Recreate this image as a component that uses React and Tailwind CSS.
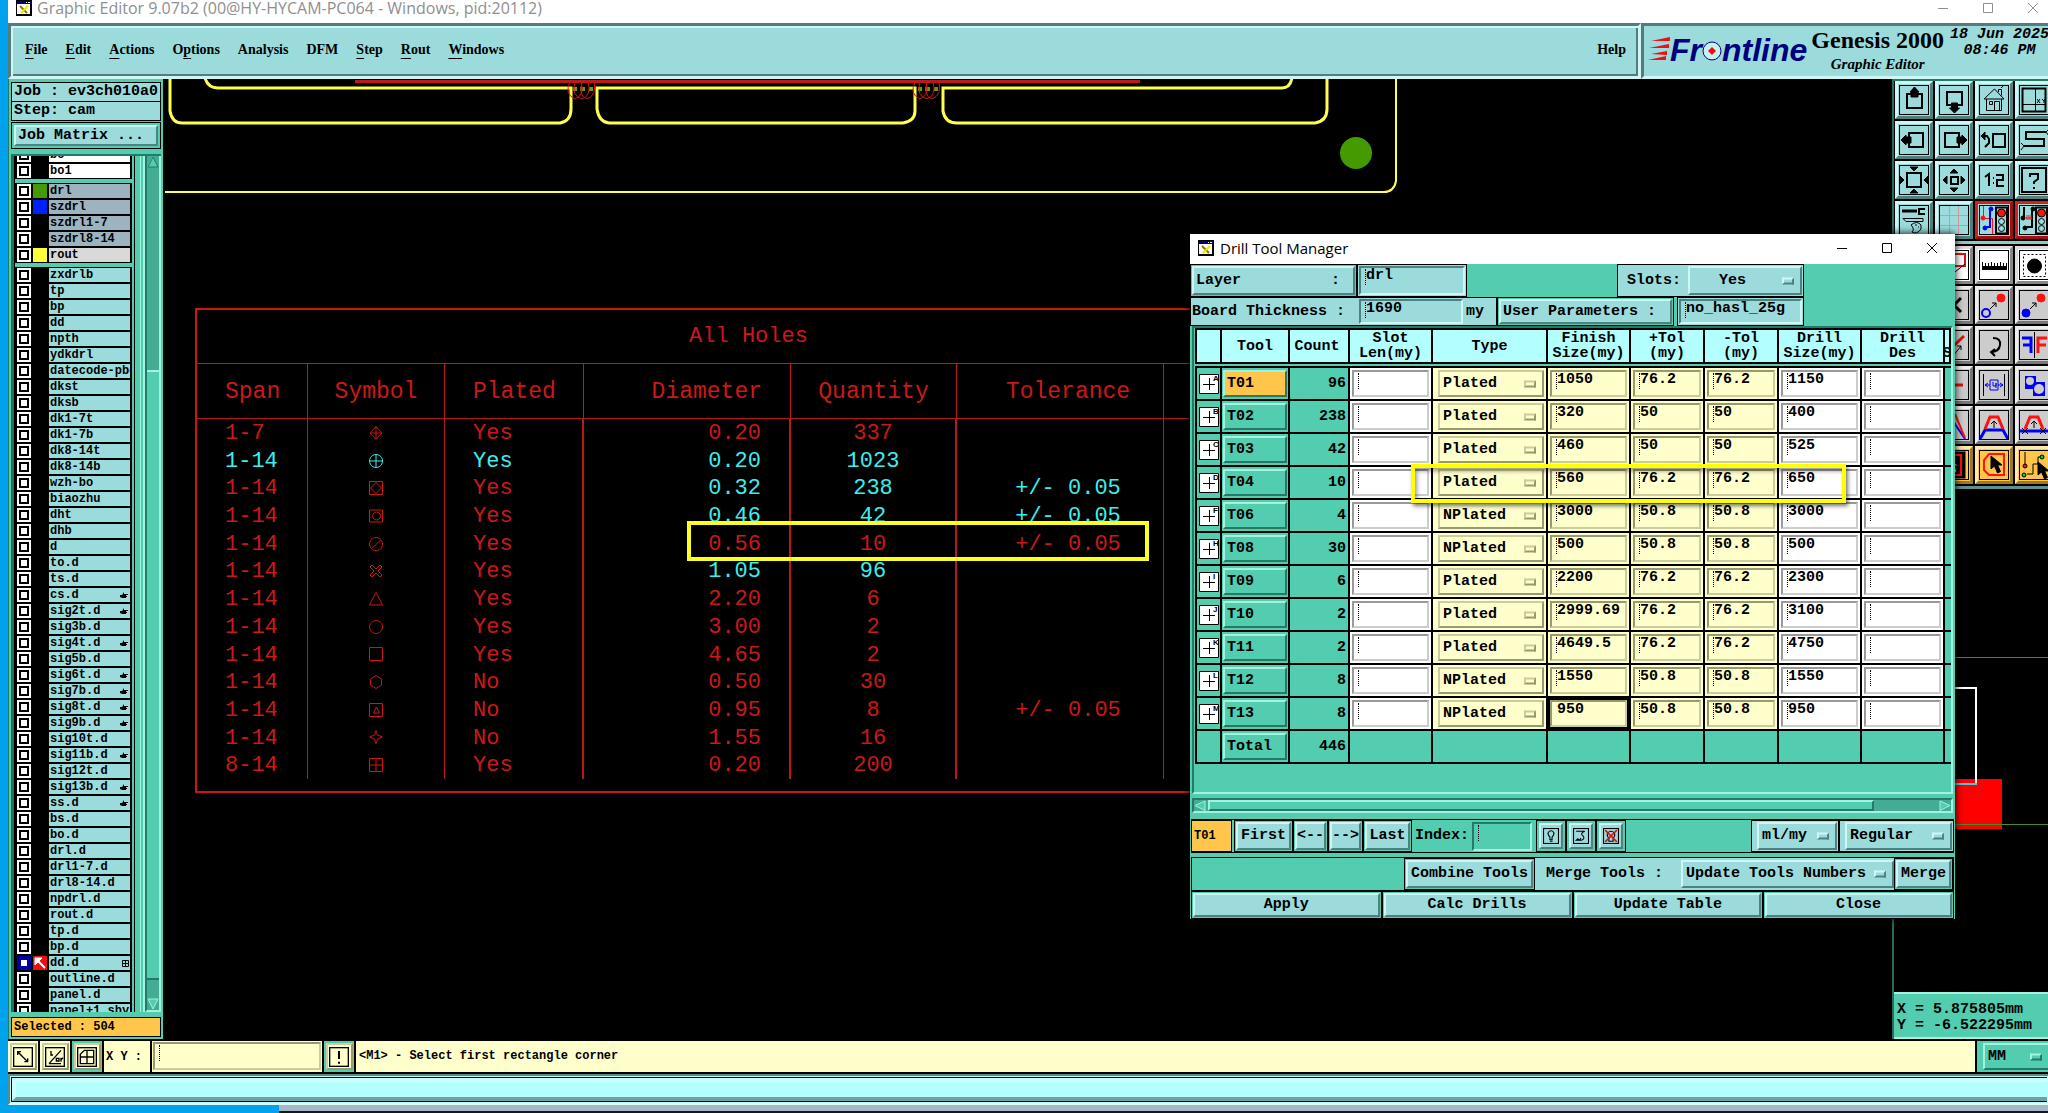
import React, { useState } from 'react';
import clsx from 'clsx';

const mono = "font-['Liberation_Mono',monospace] font-bold text-[15px] leading-4";
const monoSmall = "font-['Liberation_Mono',monospace] font-bold text-[12px] leading-[14px]";

const raised = {
  cyan: 'bg-[#9cdbdb] border-t-[#cdf6f4] border-l-[#cdf6f4] border-b-[#4d8282] border-r-[#4d8282]',
  green: 'bg-[#53cdaf] border-t-[#a3f2dd] border-l-[#a3f2dd] border-b-[#237a66] border-r-[#237a66]',
  orange: 'bg-[#ffc64b] border-t-[#a3f2dd] border-l-[#a3f2dd] border-b-[#237a66] border-r-[#237a66]',
  cream: 'bg-[#ffffcc] border-t-[#cccc9c] border-l-[#cccc9c] border-b-[#99996f] border-r-[#99996f]',
  gray: 'bg-[#cccccc] border-t-[#eeeeee] border-l-[#eeeeee] border-b-[#777777] border-r-[#777777]',
  white: 'bg-white border-t-[#dddddd] border-l-[#dddddd] border-b-[#888888] border-r-[#888888]',
  amber: 'bg-[#ffc64b] border-t-[#ffe9b0] border-l-[#ffe9b0] border-b-[#a07820] border-r-[#a07820]',
  red: 'bg-[#9cdbdb] border-t-[#d81e1e] border-l-[#d81e1e] border-b-[#a01010] border-r-[#a01010]',
};

const sunken = {
  cyan: 'bg-[#9cdbdb] border-t-[#4d8282] border-l-[#4d8282] border-b-[#cdf6f4] border-r-[#cdf6f4]',
  green: 'bg-[#53cdaf] border-t-[#237a66] border-l-[#237a66] border-b-[#a3f2dd] border-r-[#a3f2dd]',
  cream: 'bg-[#ffffcc] border-t-[#99996f] border-l-[#99996f] border-b-[#cccc9c] border-r-[#cccc9c]',
  white: 'bg-white border-t-[#999999] border-l-[#999999] border-b-[#cccccc] border-r-[#cccccc]',
};

const menus = [
  ['', 'F', 'ile'],
  ['', 'E', 'dit'],
  ['', 'A', 'ctions'],
  ['O', 'p', 'tions'],
  ['Analysis', '', ''],
  ['DFM', '', ''],
  ['', 'S', 'tep'],
  ['', 'R', 'out'],
  ['', 'W', 'indows'],
];

const layerGroups = [
  { bg: 'bg-white', rows: ['bo', 'bo1'] },
  { bg: 'bg-[#9cb4c0]', rows: ['drl', 'szdrl', 'szdrl1-7', 'szdrl8-14', 'rout'] },
  {
    bg: 'bg-[#9cdbdb]',
    rows: [
      'zxdrlb', 'tp', 'bp', 'dd', 'npth', 'ydkdrl', 'datecode-pbo', 'dkst', 'dksb', 'dk1-7t', 'dk1-7b',
      'dk8-14t', 'dk8-14b', 'wzh-bo', 'biaozhu', 'dht', 'dhb', 'd', 'to.d', 'ts.d', 'cs.d', 'sig2t.d',
      'sig3b.d', 'sig4t.d', 'sig5b.d', 'sig6t.d', 'sig7b.d', 'sig8t.d', 'sig9b.d', 'sig10t.d', 'sig11b.d',
      'sig12t.d', 'sig13b.d', 'ss.d', 'bs.d', 'bo.d', 'drl.d', 'drl1-7.d', 'drl8-14.d', 'npdrl.d', 'rout.d',
      'tp.d', 'bp.d', 'dd.d', 'outline.d', 'panel.d', 'panel+1.sby',
    ],
  },
];
const swatches = { drl: 'bg-[#449a00]', szdrl: 'bg-[#0021ff]', rout: 'bg-[#ffff38]', 'dd.d': 'bg-[#ee1010]' };
const handed = ['cs.d', 'sig2t.d', 'sig4t.d', 'sig6t.d', 'sig7b.d', 'sig8t.d', 'sig9b.d', 'sig11b.d', 'sig13b.d', 'ss.d'];

const holes = [
  ['1-7', 'diamondPlus', 'Yes', '0.20', '337', ''],
  ['1-14', 'circlePlus', 'Yes', '0.20', '1023', '', 'all'],
  ['1-14', 'boxDiamond', 'Yes', '0.32', '238', '+/- 0.05', 'some'],
  ['1-14', 'boxCircle', 'Yes', '0.46', '42', '+/- 0.05', 'some'],
  ['1-14', 'circleSlash', 'Yes', '0.56', '10', '+/- 0.05'],
  ['1-14', 'cross', 'Yes', '1.05', '96', '', 'some'],
  ['1-14', 'triangle', 'Yes', '2.20', '6', ''],
  ['1-14', 'circle', 'Yes', '3.00', '2', ''],
  ['1-14', 'box', 'Yes', '4.65', '2', ''],
  ['1-14', 'hexagon', 'No', '0.50', '30', ''],
  ['1-14', 'boxTriangle', 'No', '0.95', '8', '+/- 0.05'],
  ['1-14', 'star', 'No', '1.55', '16', ''],
  ['8-14', 'boxPlus', 'Yes', '0.20', '200', ''],
];

const tools = [
  ['A', 'T01', 96, 'Plated', '1050', '76.2', '76.2', '1150'],
  ['B', 'T02', 238, 'Plated', '320', '50', '50', '400'],
  ['C', 'T03', 42, 'Plated', '460', '50', '50', '525'],
  ['D', 'T04', 10, 'Plated', '560', '76.2', '76.2', '650'],
  ['F', 'T06', 4, 'NPlated', '3000', '50.8', '50.8', '3000'],
  ['H', 'T08', 30, 'NPlated', '500', '50.8', '50.8', '500'],
  ['I', 'T09', 6, 'Plated', '2200', '76.2', '76.2', '2300'],
  ['J', 'T10', 2, 'Plated', '2999.69', '76.2', '76.2', '3100'],
  ['K', 'T11', 2, 'Plated', '4649.5', '76.2', '76.2', '4750'],
  ['L', 'T12', 8, 'NPlated', '1550', '50.8', '50.8', '1550'],
  ['M', 'T13', 8, 'NPlated', '950', '50.8', '50.8', '950'],
];

const symbols = {
  diamondPlus: <path d="M8 1.5 14 8 8 14.5 2 8ZM8 1.5v13M2 8h12" />,
  circlePlus: <path d="M8 1.5a6.5 6.5 0 1 0 .1 0ZM8 1.5v13M1.5 8h13" />,
  boxDiamond: <path d="M1.5 1.5h13v13h-13ZM8 2.5 13.5 8 8 13.5 2.5 8Z" />,
  boxCircle: <path d="M1.5 2h13v12h-13ZM8.5 4a4 4 0 1 0 .1 0Z" />,
  circleSlash: <path d="M8 1.5a6.5 6.5 0 1 0 .1 0ZM4 12.5 12.5 4" />,
  cross: <path d="m2 4 2-2 4 4 4-4 2 2-4 4 4 4-2 2-4-4-4 4-2-2 4-4Z" />,
  triangle: <path d="M8 1.5 14.5 14h-13Z" />,
  circle: <path d="M8 1.5a6.5 6.5 0 1 0 .1 0Z" />,
  box: <path d="M1.5 1.5h13v13h-13Z" />,
  hexagon: <path d="m8 1.5 5.5 3.5v6L8 14.5 2.5 11V5Z" />,
  boxTriangle: <path d="M1.5 1.5h13v13h-13ZM8.500 5l3 6h-6Z" />,
  star: <path d="M8 1.5 9.5 6l5 2-5 2L8 14.5 6.5 10l-5-2 5-2Z" />,
  boxPlus: <path d="M1.5 1.5h13v13h-13ZM8 1.5v13M1.5 8h13" />,
};

const cursorPath = 'M0 0v13l3.5-3 3 7 3-1.5-3-6.5H11Z';

const Traffic = () => (
  <>
    <rect x="17" y="2.5" width="11" height="26" strokeWidth="2" />
    <circle cx="22.5" cy="8" r="4" fill="#f11" />
    <circle cx="22.5" cy="16.5" r="3" />
    <circle cx="22.5" cy="23.5" r="3" />
  </>
);

const icons = {
  up: <><rect x="8" y="9" width="15" height="14" strokeWidth="2" /><path fill="#000" d="M15.5 2 11 7h1v5h7V7h1Z" /></>,
  down: <><rect x="8" y="7" width="15" height="13" strokeWidth="2" /><path fill="#000" d="m15.5 28-5-5h2v-5h6v5h2Z" /></>,
  home: <path d="M7.5 14v11.5h15V14M5 14 15.5 4 25 14ZM19.5 7V4.5h3v6M15.5 25v-8.5h5V25M10.5 16.500h3v3h-3ZM22 3l2-2" />,
  panels: <><rect x="3.5" y="3.5" width="23" height="23" strokeWidth="2" /><path d="M16.5 4v22M4 19.500h22M18 14l3 4M21 14l-3 4M23 14l2 2v2M25 16l1-2" /></>,
  left: <><rect x="10" y="8" width="14" height="14" strokeWidth="2" /><path fill="#000" d="m2 15 5-5v2h5v6H7v2Z" /></>,
  right: <><rect x="6" y="8" width="14" height="14" strokeWidth="2" /><path fill="#000" d="m28 15-5-5v2h-5v6h5v2Z" /></>,
  undo: <><rect x="14" y="9" width="12" height="13" strokeWidth="2" /><path fill="#000" d="m2 11 4-4v8Z" /><path strokeWidth="2" d="M4 11h4l2 3v4l-4 4" /></>,
  snake: <><path strokeWidth="2" d="M27 7H7v7h18v7H5" /><path d="m27 7 3-3M27 7l3 4M5 21l-3-3M5 21l-3 4" /></>,
  fit: <><rect x="8" y="8" width="14" height="14" strokeWidth="2" /><path fill="#000" d="m15 6-4-4h8ZM15 24l-4 4h8ZM5 15 1 11v8ZM25 15l4-4v8Z" /></>,
  shrink: <><rect x="12" y="12" width="7" height="7" strokeWidth="2" /><path fill="#000" d="m15 4-4 4h8ZM15 27l-4-4h8ZM4 15l4-4v8ZM26 15l-4-4v8Z" /></>,
  ratio: <path strokeWidth="2" d="m6 12 4-3v12M14 13h1M14 18h1M17 10h7v5h-6v6h7" />,
  help: <><rect x="3" y="3" width="24" height="24" strokeWidth="2" /><path strokeWidth="2" d="M11 12V9h8v5l-4 3v2M15 22v2" /></>,
  wrench: <><path strokeWidth="3" d="M3 6h15" /><path strokeWidth="2" d="M26 4h-6v5h6" /><path d="M4 13.500h20v3H7Z" /><path d="M12 20q6-5 10 0v4q-4 6-9 3 3-3-1-7ZM16 20h2M19 22h1" /></>,
  grid: <path stroke="#c89aa0" d="M10.5 1v28M19.500 1v28M1 10.500h28M1 20.500h28" />,
  traffic: <><path stroke="#f11" d="M4.500 0v13.500h9V30" /><path stroke="#00f" strokeWidth="2" d="M11 5v17H7" /><circle cx="12" cy="4" r="2" fill="#00f" stroke="#00f" /><circle cx="4" cy="13" r="2" fill="#f11" stroke="#f11" /><circle cx="6" cy="23" r="2" fill="#00f" stroke="#00f" /><Traffic /></>,
  trafficWave: <><path strokeWidth="2" d="M5 2v11M13 5v17H8" /><path stroke="#f11" d="M7 13h6M8 10v5M10 10v5M12 10v5" /><circle cx="14" cy="4" r="2" fill="#000" /><circle cx="4" cy="13" r="2" fill="#000" /><circle cx="6" cy="23" r="2" fill="#000" /><Traffic /></>,
  shape: <><path stroke="#e01010" strokeWidth="2" d="M6 4h20v12H6Z" /><path d="M16 22l10-8" /></>,
  ruler: <path stroke="none" fill="#000" d="M3 12h1v4h2v-3h1v3h2v-3h1v3h2v-4h1v4h2v-3h1v3h2v-3h1v3h2v-4h1v4h2v-3h1v3h2v-3h1v7H3Z" />,
  pad: <><rect x="4.5" y="4.5" width="22" height="22" strokeDasharray="2 2" /><circle cx="15.5" cy="16" r="7" fill="#000" /></>,
  cut: <path strokeWidth="3" d="m8 8 14 14M22 8 8 22" />,
  move: <><circle cx="7" cy="23" r="4" stroke="#00f" strokeWidth="2" /><circle cx="22" cy="8" r="4" fill="#f11" stroke="#f11" /><path d="m11 19 6-6m-4 0h4v4" /></>,
  copy: <><circle cx="7" cy="23" r="4" fill="#00f" stroke="#00f" /><circle cx="22" cy="8" r="4" fill="#f11" stroke="#f11" /><path d="m11 19 6-6m-4 0h4v4" /></>,
  slash: <><path stroke="#e01010" strokeWidth="3" d="M4 26 25 6" /><path d="m14 26 8-10m-4 0h4v4" /></>,
  rotate: <path strokeWidth="2" d="M14 8q8 0 7 7t-9 7m4-3-4 3 4 4" />,
  mirror: <><path d="M15.5 2v26" /><path stroke="#00f" strokeWidth="3" d="M3 8h9v15M4 15h8" /><path stroke="#f11" strokeWidth="3" d="M28 8h-9v15M19 15h8" /></>,
  dash: <path stroke="#e01010" strokeWidth="3" d="M4 15h20" />,
  size: <><path d="M4.500 4v22M25.500 4v22" /><path stroke="#00f" d="M6 15h5M19 15h5M9 13l-3 2 3 2M21 13l3 2-3 2M11 10h8v10h-8ZM14 12v4h3v-3 5" /></>,
  pads: <><path stroke="none" fill="#00f" d="M6 6h11v6h9v14H14v-7H6Z" /><circle cx="11" cy="11" r="4" fill="#ccc" stroke="none" /><circle cx="20" cy="19" r="5" fill="#ccc" stroke="none" /></>,
  wedge: <><path stroke="#00f" strokeWidth="2" d="m12 8 14 21" /><path stroke="#f11" strokeWidth="2" d="m16 4 10 24" /></>,
  trapezoid: <><path stroke="#00f" strokeWidth="3" d="m1 29 5-9h18l5 9" /><path stroke="#f11" strokeWidth="3" d="m6 19 5-12h8l5 12" /><path d="M15 18v-7m-3 3 3-3 3 3" /></>,
  trapezoidCut: <><path stroke="#00f" strokeWidth="3" d="M1 21h28" /><path stroke="#f11" strokeWidth="3" d="m6 19 5-12h8l5 12" /><path d="M15 18v-7m-3 3 3-3 3 3M3 18l6 6M9 18l-6 6M21 18l6 6M27 18l-6 6" /></>,
  black: <><rect x="2" y="2" width="24" height="26" fill="#000" /><rect x="5" y="5" width="17" height="20" stroke="#f11" strokeWidth="2" /><path fill="#ffc64b" d="M9 8v12l4-3 3 6 2-1-2-6h4Z" /></>,
  pick: <><path stroke="#f11" strokeWidth="2" d="M10 4h15v21H10l-5-5V10Z" /><path transform="translate(12 6)" fill="#000" d={cursorPath} /></>,
  net: <><path d="M6 2v14M8 24h6V14h5V7h4" /><circle cx="6" cy="16" r="2" fill="#f11" /><circle cx="5" cy="25" r="2" fill="#1c1" /><circle cx="23" cy="7" r="2" fill="#1c1" /><path transform="translate(19 12)" fill="#000" d={cursorPath} /></>,
  diagonal: <path d="m7 7 15 15M7 12V7h5M22 17v5h-5" />,
  angle: <path d="M6 25 24 5M6 25h18M9 6v6h3M17 17h4v4h-4ZM24 16v6M24 19l3-3" />,
  window: <path d="M5 25V11l6-6h14v20ZM15 5v20M5 15h20" />,
  alert: <path strokeWidth="3" d="M15 6v12M15 22v3" />,
  bulb: <path d="M13 22v-5q-5-5-3-9 5-6 10 0 2 4-3 9v5ZM13 25h5" />,
  wave: <path d="M6 6h16q-10 4-3 9 4 5-3 8H6l3-3 3 3 3-4" />,
  bulbOff: <><path d="M11 25v-6q-5-5-2-10 6-6 12 0 3 5-2 10v6Z" /><path stroke="#e01010" strokeWidth="3" d="M4 4l22 22M26 4 4 26" /></>,
};

const toolRows = [
  [['up', 'cyan'], ['down', 'cyan'], ['home', 'cyan'], ['panels', 'cyan']],
  [['left', 'cyan'], ['right', 'cyan'], ['undo', 'cyan'], ['snake', 'cyan']],
  [['fit', 'cyan'], ['shrink', 'cyan'], ['ratio', 'cyan'], ['help', 'cyan']],
  [['wrench', 'cyan'], ['grid', 'cyan'], ['traffic', 'red'], ['trafficWave', 'red']],
];
const editRows = [
  [['shape', 'white'], ['shape', 'white'], ['ruler', 'white'], ['pad', 'white']],
  [['cut', 'gray'], ['cut', 'gray'], ['move', 'gray'], ['copy', 'gray']],
  [['slash', 'gray'], ['slash', 'gray'], ['rotate', 'gray'], ['mirror', 'gray']],
  [['dash', 'gray'], ['dash', 'gray'], ['size', 'gray'], ['pads', 'gray']],
  [['wedge', 'gray'], ['wedge', 'gray'], ['trapezoid', 'gray'], ['trapezoidCut', 'gray']],
  [['black', 'amber'], ['black', 'amber'], ['pick', 'amber'], ['net', 'amber']],
];

const Glyph = ({ name, className, small }) => (
  <svg viewBox="0 0 30 30" className={className} fill="none" stroke="#000" strokeWidth={small ? 2 : 1} aria-hidden="true">
    {icons[name]}
    {small ? <rect x="1" y="1" width="28" height="28" /> : <rect x=".5" y=".5" width="29" height="29" />}
  </svg>
);

const ToolGrid = ({ rows }) => (
  <div className="flex flex-col gap-[2px] bg-black pl-[1px]">
    {rows.map((row, r) => (
      <div key={r} className="flex gap-[2px]">
        {row.map(([name, tone], c) => (
          <button key={c} type="button" aria-label={name} className={clsx('flex size-[38px] shrink-0 items-center justify-center border-3', raised[tone])}>
            <Glyph name={name} className="size-[30px]" />
          </button>
        ))}
      </div>
    ))}
  </div>
);

const AppIcon = ({ className }) => (
  <svg viewBox="0 0 16 16" className={className} aria-hidden="true">
    <path fill="#000" d="M0 0h16v16H0z" />
    <path fill="#fff" d="M1 4h13v10H1z" />
    <path fill="#00007c" d="M1 1h14v3H1z" />
    <path fill="#fff" d="M10 2h1v1h-1zM12 2h2v1h-2z" />
    <path stroke="#887b00" strokeWidth="2" d="m4 6 7 7" />
    <path stroke="#e8e800" strokeWidth="2" d="m12 6-7 7" />
  </svg>
);

const WindowButtons = ({ className }) => (
  <div className={clsx('flex gap-[29px]', className)}>
    {[['Minimize', 'M3 8.5h10'], ['Maximize', 'M3.5 3.5h9v9h-9Z'], ['Close', 'm3 3 10 10M13 3 3 13']].map(([label, d]) => (
      <button key={label} type="button" aria-label={label} className="size-4">
        <svg viewBox="0 0 16 16" className="size-4" fill="none" stroke="currentColor"><path d={d} /></svg>
      </button>
    ))}
  </div>
);

const Field = ({ label, value = '', tone = 'cyan', className, beam = true }) => {
  const [text, setText] = useState(value);
  return (
    <div className={clsx('flex items-start border-2 pl-1', sunken[tone], className)}>
      <span className={clsx('mt-[1px] h-4 w-0 shrink-0 border-l border-dotted', beam ? 'border-black' : 'border-transparent')} />
      <input
        aria-label={label}
        value={text}
        onChange={(e) => setText(e.target.value)}
        className={clsx(mono, 'h-4 w-full min-w-0 bg-transparent outline-none')}
      />
    </div>
  );
};

const Choice = ({ label, value, tone = 'cyan', className, pad = 'pl-[3px]' }) => (
  <div className={clsx('relative flex border-2', raised[tone], className)}>
    <select aria-label={label} className={clsx(mono, 'w-full appearance-none bg-transparent outline-none', pad)}>
      <option>{value}</option>
    </select>
    <span className={clsx('pointer-events-none absolute right-[6px] top-1/2 h-[7px] w-3 -translate-y-1/2 border-2', raised[tone])} />
  </div>
);

const Push = ({ children, tone = 'cyan', className, align = 'text-center' }) => (
  <div className={clsx('flex border border-black bg-[#53cdaf] p-[1px]', className)}>
    <button type="button" className={clsx(mono, 'w-full border-2 whitespace-pre', align, raised[tone])}>{children}</button>
  </div>
);

const Header = () => (
  <header className="flex h-14 shrink-0 bg-black">
    <nav className="flex flex-1 items-center border-3 border-t-[#557c7c] border-l-[#557c7c] border-b-[#cdf6f4] border-r-[#cdf6f4] bg-[#9cdbdb] pr-3 pb-[3px] pl-[14px] shadow-[inset_2px_2px_#cdf6f4,inset_-2px_-2px_#557c7c]">
      <div className="flex flex-1 gap-[18px] font-['Liberation_Serif',serif] text-[14px] font-bold">
        {menus.map(([before, key, after]) => (
          <button key={before + key + after} type="button">
            {before}<span className="underline underline-offset-4">{key}</span>{after}
          </button>
        ))}
      </div>
      <button type="button" className="font-['Liberation_Serif',serif] text-[14px] font-bold">Help</button>
    </nav>
    <div className="flex w-[407px] items-start overflow-hidden border-3 border-r-0 border-t-[#557c7c] border-l-[#557c7c] border-b-[#cdf6f4] bg-[#9cdbdb] pl-1">
      <div className="flex items-baseline pt-2 font-['Liberation_Sans',sans-serif] text-[32px] leading-8 font-bold text-[#00007f] italic">
        <svg viewBox="0 0 22 24" className="h-6 w-[22px]" fill="#ee1010" aria-hidden="true">
          <path d="M3 4 22 0v4ZM1 11l20-4v4ZM3 17l16-3v4ZM0 23l18-4v4Z" />
        </svg>
        <span>Fr</span>
        <svg viewBox="0 0 20 20" className="-mb-[2px] size-5" fill="none" aria-hidden="true">
          <circle cx="10" cy="10" r="9" fill="#c8f0f0" stroke="#00007f" />
          <path fill="#ee1010" d="m10 6 4 4-4 4-4-4Z" />
        </svg>
        <span>ntline</span>
      </div>
      <div className="flex shrink-0 flex-col items-center pl-1 font-['Liberation_Serif',serif] whitespace-nowrap">
        <h1 className="text-[24px] leading-7 font-bold">Genesis 2000</h1>
        <p className="text-[15px] leading-5 font-bold italic">Graphic Editor</p>
      </div>
      <div className="shrink-0 pt-[1px] pl-[6px] text-center font-['Liberation_Mono',monospace] text-[15px] leading-4 font-bold whitespace-pre italic">
        <p>18 Jun 2025</p>
        <p>08:46 PM</p>
      </div>
    </div>
  </header>
);

const LayerRow = ({ name, bg }) => {
  const active = name === 'dd.d';
  return (
    <label className={clsx('flex h-4 gap-[2px] px-[2px] py-[1px]', monoSmall)}>
      <span className={clsx('flex size-[14px] shrink-0 items-center justify-center', active ? 'bg-[#0000a0]' : 'bg-white')}>
        <input type="checkbox" className={clsx('size-[10px] appearance-none border-2 bg-white', active ? 'border-[#0000a0]' : 'border-black')} />
      </span>
      <span className={clsx('size-[14px] shrink-0', swatches[name])}>
        {active && (
          <svg viewBox="0 0 14 14" className="size-[14px]" stroke="#fff" fill="#fff"><path strokeWidth="2" d="m5 5 7 7" /><path d="M2 2h7L2 9Z" /></svg>
        )}
      </span>
      <span className={clsx('flex min-w-0 flex-1 items-center justify-between overflow-hidden pl-[1px]', name === 'rout' ? 'bg-[#d9d9d9]' : bg)}>
        <span className="whitespace-nowrap">{name}</span>
        {handed.includes(name) && (
          <svg viewBox="0 0 8 7" className="mr-[2px] h-[7px] w-2 shrink-0"><path d="M0 3h2l2-3v2h4v1H6v1h1v1H6v1H2L0 5Z" /></svg>
        )}
        {active && (
          <svg viewBox="0 0 7 7" className="mr-[1px] size-[7px] shrink-0" fill="none" stroke="#000"><path d="M.5.5h6v6h-6ZM3.5 0v7M0 3.5h7" /></svg>
        )}
      </span>
    </label>
  );
};

const Sidebar = () => (
  <aside className="flex w-[155px] shrink-0 flex-col border-l border-[#237a66] bg-[#53cdaf] px-[2px] pt-[3px]">
    <div className={clsx(mono, 'flex h-5 items-center border border-black bg-[#9cdbdb] pl-[2px] whitespace-pre')}>Job : ev3ch010a0</div>
    <div className={clsx(mono, 'flex h-[19px] items-center border border-t-0 border-black bg-[#9cdbdb] pl-[2px] whitespace-pre')}>Step: cam</div>
    <div className="mt-[1px] flex h-[27px] border border-black p-[2px]">
      <button type="button" className={clsx(mono, 'w-full border-2 pl-[2px] text-left', raised.cyan)}>Job Matrix ...</button>
    </div>
    <div className="mt-[5px] flex min-h-0 flex-1 border-t-2 border-t-[#237a66]">
      <div className="w-1 shrink-0 border-r border-black bg-[#2b6b5c]" />
      <div className="flex w-[117px] shrink-0 flex-col gap-1 overflow-hidden">
        {layerGroups.map((group, i) => (
          <div key={i} className={clsx('bg-black', i === 0 && '-mt-[9px]')}>
            {group.rows.map((name) => <LayerRow key={name} name={name} bg={group.bg} />)}
          </div>
        ))}
      </div>
      <div className="ml-[2px] w-2 border-x border-l-black border-r-[#a3f2dd]" />
      <div className="ml-[2px] w-[2px] bg-[#a3f2dd]" />
      <div className="ml-auto flex w-4 flex-col border-2 border-t-0 border-l-[#237a66] border-r-[#a3f2dd] border-b-[#a3f2dd] bg-[#43ac93]">
        <svg viewBox="0 0 12 12" className="size-3"><path fill="#53cdaf" stroke="#a3f2dd" d="M6 1 1 11" /><path fill="#53cdaf" stroke="#237a66" d="M6 1 11 11H1Z" /></svg>
        <div className="mt-[202px] flex-1 border-t-2 border-b-2 border-t-[#a3f2dd] border-b-[#237a66] bg-[#53cdaf]" />
        <svg viewBox="0 0 12 12" className="mt-[18px] size-3"><path fill="#53cdaf" stroke="#a3f2dd" d="M11 1H1L6 11Z" /></svg>
      </div>
    </div>
    <div className={clsx(monoSmall, 'mt-[5px] mb-[2px] flex h-5 items-center border border-black bg-[#ffc64b] pl-[2px]')}>Selected : 504</div>
  </aside>
);

const HoleTable = () => {
  const cols = 'grid grid-cols-[111px_137px_139px_207px_166px_207px_1fr]';
  const cyan = 'text-[#3deeee]';
  const line = 'border-[#b81a1a]';
  return (
    <table className="absolute top-[229px] left-8 block w-[1107px] border-2 border-[#d01414] pb-3 font-['Liberation_Mono',monospace] text-[22px] leading-6 text-[#cc1818]">
      <thead className="block">
        <tr className={clsx('flex h-[54px] items-center justify-center border-b', line)}>
          <th colSpan={7} className="font-normal">All Holes</th>
        </tr>
        <tr className={clsx('h-[55px] border-b text-[23px]', cols, line)}>
          {[['Span', 'pl-7 text-left'], ['Symbol', 'text-center'], ['Plated', 'pl-7 text-left'], ['Diameter', 'pr-7 text-right'], ['Quantity', 'text-center'], ['Tolerance', 'pl-4 text-center']].map(([label, cls]) => (
            <th key={label} className={clsx('border-r pt-4 font-normal', line, cls)}>{label}</th>
          ))}
        </tr>
      </thead>
      <tbody className="grid h-[360px] auto-rows-fr">
        {holes.map(([span, symbol, plated, diameter, qty, tol, hit], i) => (
          <tr key={i} className={cols}>
            <td className={clsx('border-r pt-[3px] pl-7', line, hit === 'all' && cyan)}>{span}</td>
            <td className={clsx('flex items-center justify-center border-r', line, hit === 'all' && cyan)}>
              <svg viewBox="0 0 16 16" className="size-4" fill="none" stroke="currentColor">{symbols[symbol]}</svg>
            </td>
            <td className={clsx('border-r-2 pt-[3px] pl-7', line, hit === 'all' && cyan)}>{plated}</td>
            <td className={clsx('border-r-2 pt-[3px] pr-7 text-right', line, hit && cyan)}>{diameter}</td>
            <td className={clsx('border-r-2 pt-[3px] text-center', line, hit && cyan)}>{qty}</td>
            <td className={clsx('border-r pt-[3px] pl-4 text-center', line, hit && cyan)}>{tol}</td>
          </tr>
        ))}
      </tbody>
    </table>
  );
};

const Canvas = () => (
  <main className="relative min-w-0 flex-1 overflow-hidden bg-black">
    <svg viewBox="163 79 1300 130" className="absolute top-0 left-0 h-[130px] w-[1300px]" fill="none" aria-hidden="true">
      <g stroke="#ffff4f" strokeWidth="3">
        <path d="M170 79v32q2 12 12 12h378q11-2 11-14V88H218q-10 0-13-10" />
        <path d="M597 88h318v23q0 10-12 12H609q-10-1-12-14Z" />
        <path d="M1292 78q-2 10-10 10H943v23q2 12 14 12h358q12-2 12-14V79" />
        <path strokeWidth="2" d="M165 192h1219q10 0 12-11V79" />
      </g>
      <path stroke="#c01818" strokeWidth="3" d="M355 81.5h785" />
      {[583, 928].map((x) => (
        <g key={x}>
          <path stroke="#6f9a00" strokeWidth="4" d={`M${x - 10} 89h4m3 0h5m4 0h4`} />
          <path stroke="#d01414" d={`M${x - 13} 82q-6 12 5 17 10-4 6-17m-6 0q-4 14 7 17 10-4 6-17m-6 0q-4 14 5 17 10-4 7-17`} />
        </g>
      ))}
      <circle cx="1356" cy="153" r="16" fill="#449a00" />
    </svg>
    <HoleTable />
    <div className="absolute top-[442px] left-[524px] h-10 w-[462px] border-4 border-[#ffff20]" />
  </main>
);

const RightBar = () => (
  <aside className="flex w-[156px] shrink-0 flex-col overflow-hidden border-l-2 border-[#2b6b5c] bg-black">
    <div className="border-t-2 border-[#237a66] bg-black pb-[2px]">
      <ToolGrid rows={toolRows} />
    </div>
    <div className="mb-[2px] h-[3px] shrink-0 bg-[#8fc9c4]" />
    <ToolGrid rows={editRows} />
    <div className="mt-[2px] h-[3px] shrink-0 bg-[#5f8f8f]" />
    <div className="relative min-h-0 flex-1">
      <svg viewBox="1894 490 154 505" className="absolute top-0 left-0 h-[505px] w-[154px]" fill="none" aria-hidden="true">
        <path fill="#f00" d="M1930 780h72v50h-72z" />
        <path stroke="#4b8a2c" d="M1894 658.5h154M1894 825.5h154" />
        <path stroke="#fff" strokeWidth="2" d="M1930 689h46v96" />
        <path stroke="#4cd" strokeWidth="2" d="M1930 785h47" />
      </svg>
    </div>
    <div className={clsx('h-[47px] shrink-0 border-y-2 border-t-[#a3f2dd] border-b-[#a3f2dd] bg-[#53cdaf] pt-2 pl-[3px] whitespace-pre', mono)}>
      <p>X = 5.875805mm</p>
      <p>Y = -6.522295mm</p>
    </div>
  </aside>
);

const headings = ['', 'Tool', 'Count', 'Slot\nLen(my)', 'Type', 'Finish\nSize(my)', '+Tol\n(my)', '-Tol\n(my)', 'Drill\nSize(my)', 'Drill\nDes', ' \nS'];

const ToolTable = () => {
  const cell = 'border-t-2 border-r-2 border-black p-0';
  return (
    <table className={clsx('w-full table-fixed border-separate border-spacing-0', mono)}>
      <colgroup>
        <col className="w-[27px]" />
        <col className="w-[68px]" />
        <col className="w-[60px]" />
        <col className="w-[83px]" />
        <col className="w-[115px]" />
        <col className="w-[83px]" />
        <col className="w-[74px]" />
        <col className="w-[74px]" />
        <col className="w-[83px]" />
        <col className="w-[83px]" />
        <col />
      </colgroup>
      <thead>
        <tr>
          {headings.map((label, i) => (
            <th key={i} className="p-0 pb-[2px]">
              <div className={clsx('flex h-9 items-center justify-center overflow-hidden border-y-2 border-r-2 border-black bg-[#b3ffff] leading-[15px] whitespace-pre', i === 0 && 'border-l-2', i === 2 && 'pr-1', i === 10 && 'border-r-0')}>{label}</div>
            </th>
          ))}
        </tr>
      </thead>
      <tbody>
        {tools.map(([letter, tool, count, type, finish, plus, minus, size], i) => (
          <tr key={tool} className="h-[33px]">
            <td className={clsx(cell, 'border-l-2')}>
              <svg viewBox="0 0 20 20" className="mx-auto size-5">
                <path fill="#fff" stroke="#000" d="M.5.5h19v19H.5z" />
                <path stroke="#000" d="M4 10.5h12M10.5 4v12" />
                <text x="14" y="7" fontSize="8" fontFamily="Liberation Sans">{letter}</text>
              </svg>
            </td>
            <td className={clsx(cell, 'px-[1px]')}>
              <button type="button" className={clsx('h-[27px] w-full border-2 pl-[2px] text-left', i === 0 ? raised.orange : raised.green)}>{tool}</button>
            </td>
            <td className={clsx(cell, 'pr-[2px] text-right')}>{count}</td>
            <td className={clsx(cell, 'bg-white px-[2px]')}><Field label={`${tool} slot length`} tone="white" className="h-[27px]" /></td>
            <td className={clsx(cell, 'bg-[#ffffcc] pr-[2px] pl-[5px]')}><Choice label={`${tool} type`} value={type} tone="cream" className="h-[27px]" /></td>
            <td className={clsx(cell, 'bg-[#ffffcc] px-[2px]', tool === 'T13' && 'shadow-[inset_0_0_0_2px_#000,-2px_0_#000,0_2px_#000]')}>
              <Field label={`${tool} finish size`} value={finish} tone="cream" beam={tool !== 'T13'} className="h-[27px]" />
            </td>
            <td className={clsx(cell, 'bg-[#ffffcc] px-[2px]')}><Field label={`${tool} plus tolerance`} value={plus} tone="cream" className="h-[27px]" /></td>
            <td className={clsx(cell, 'bg-[#ffffcc] px-[2px]')}><Field label={`${tool} minus tolerance`} value={minus} tone="cream" className="h-[27px]" /></td>
            <td className={clsx(cell, 'bg-white px-[2px]')}><Field label={`${tool} drill size`} value={size} tone="white" className="h-[27px]" /></td>
            <td className={clsx(cell, 'bg-white px-[2px]')}><Field label={`${tool} drill des`} tone="white" className="h-[27px]" /></td>
            <td className="border-t-2 border-black p-0" />
          </tr>
        ))}
        <tr className="h-[35px]">
          <td className={clsx(cell, 'border-b-2 border-l-2')} />
          <td className={clsx(cell, 'border-b-2 px-[1px]')}>
            <button type="button" className={clsx('h-[27px] w-full border-2 pl-[2px] text-left', raised.green)}>Total</button>
          </td>
          <td className={clsx(cell, 'border-b-2 pr-[2px] text-right')}>446</td>
          {[3, 4, 5, 6, 7, 8, 9].map((n) => <td key={n} className={clsx(cell, 'border-b-2')} />)}
          <td className="border-y-2 border-black p-0" />
        </tr>
      </tbody>
    </table>
  );
};

const SmallIconButton = ({ name }) => (
  <div className="flex border border-black p-[2px]">
    <button type="button" aria-label={name} className={clsx('flex w-6 items-center justify-center border-2', raised.cyan)}>
      <Glyph name={name} small className="size-4" />
    </button>
  </div>
);

const DrillToolManager = () => (
  <section className={clsx('absolute top-[234px] left-[1190px] w-[765px] bg-[#53cdaf] shadow-[0_0_8px_#000]', mono)}>
    <div className="flex h-[30px] items-center bg-white pr-[15px] pb-[2px] pl-2">
      <AppIcon className="size-4" />
      <h2 className="flex-1 pl-[6px] font-['Open_Sans',sans-serif] text-[15px] leading-5 font-normal">Drill Tool Manager</h2>
      <WindowButtons />
    </div>
    <div className="flex h-[33px]">
      <Push className="w-[167px]" align="pl-[2px] text-left">{'Layer          :'}</Push>
      <div className="flex w-[110px] border border-black bg-[#9cdbdb] p-[1px]"><Field label="Layer name" value="drl" className="w-full" /></div>
      <div className="ml-[150px] flex w-[187px] items-center border border-black bg-[#9cdbdb] p-[1px] pl-[9px]">
        <span className="flex-1">Slots:</span>
        <Choice label="Slots" value="Yes" className="h-full w-[114px]" pad="pl-[29px]" />
      </div>
    </div>
    <div className="flex h-[29px]">
      <div className="flex w-[307px] items-center border border-black bg-[#9cdbdb] p-[1px]">
        <span className="w-[167px]">Board Thickness :</span>
        <Field label="Board thickness" value="1690" className="h-full w-[104px]" />
        <span className="pl-[3px]">my</span>
      </div>
      <Push className="w-[177px]" align="pl-[2px] text-left">{'User Parameters :'}</Push>
      <div className="ml-[3px] flex w-[127px] border border-black bg-[#9cdbdb] p-[1px]"><Field label="User parameters" value="no_hasl_25g" className="w-full" /></div>
    </div>
    <div className="mr-[2px] ml-[2px] h-[468px] border-2 border-t-[#237a66] border-l-[#237a66] border-b-[#a3f2dd] border-r-[#a3f2dd] pl-[1px]">
      <ToolTable />
    </div>
    <div className="mx-[2px] mt-1 flex h-[15px] border-2 border-t-[#237a66] border-l-[#237a66] border-b-[#a3f2dd] border-r-[#a3f2dd] bg-[#43ac93]">
      <svg viewBox="0 0 12 11" className="h-[11px] w-3"><path fill="#53cdaf" stroke="#a3f2dd" d="M11 1 1 5.5l10 5Z" /></svg>
      <div className="ml-[2px] flex-1 border-2 border-t-[#a3f2dd] border-l-[#a3f2dd] border-b-[#237a66] border-r-[#237a66] bg-[#53cdaf]" />
      <svg viewBox="0 0 12 11" className="ml-[65px] h-[11px] w-3"><path fill="#53cdaf" stroke="#a3f2dd" d="m1 1 10 4.5L1 10.5Z" /></svg>
    </div>
    <div className="mt-[6px] mr-[1px] ml-[1px] flex h-[34px] border-y border-black">
      <div className={clsx(monoSmall, 'mr-[2px] flex w-[41px] items-center border border-black bg-[#ffc64b] pl-[2px]')}>T01</div>
      <Push className="w-[59px]">First</Push>
      <Push className="w-[35px]">{'<--'}</Push>
      <Push className="w-[35px]">{'-->'}</Push>
      <Push className="w-[49px]">Last</Push>
      <label className="flex items-center gap-[3px] pr-1 pl-[3px]">
        <span>Index:</span>
        <Field label="Index" tone="green" className="h-[29px] w-[60px]" />
      </label>
      <SmallIconButton name="bulb" />
      <SmallIconButton name="wave" />
      <SmallIconButton name="bulbOff" />
      <div className="flex-1" />
      <div className="flex w-[88px] border border-black bg-[#9cdbdb] p-[1px] pl-[5px]"><Choice label="Units" value="ml/my" className="w-full" /></div>
      <div className="flex w-[115px] border border-black bg-[#9cdbdb] p-[1px] pl-[5px]"><Choice label="Mode" value="Regular" className="w-full" /></div>
    </div>
    <div className="mx-[1px] mt-1 flex h-[34px] border border-black">
      <div className="flex-1" />
      <Push className="w-[131px]">Combine Tools</Push>
      <div className="flex w-[359px] items-center bg-[#9cdbdb] pl-[11px]">
        <span className="flex-1">Merge Tools :</span>
        <Choice label="Merge tools" value="Update Tools Numbers" className="h-[28px] w-[213px]" />
      </div>
      <Push className="w-[59px]">Merge</Push>
    </div>
    <div className="mx-[1px] grid h-7 grid-cols-4">
      {['Apply', 'Calc Drills', 'Update Table', 'Close'].map((label) => <Push key={label}>{label}</Push>)}
    </div>
    <div className="pointer-events-none absolute top-[230px] left-[221px] h-[39px] w-[435px] border-4 border-[#ffff00] shadow-[2px_3px_4px_#0008,inset_2px_3px_4px_#0006]" />
  </section>
);

const BarButton = ({ name, on }) => (
  <div className={clsx('flex w-8 items-center justify-center border-r-2 border-black p-[1px]', on ? 'bg-[#53cdaf]' : 'bg-[#ffffcc]')}>
    <button type="button" aria-label={name} className={clsx('flex size-[27px] items-center justify-center border-2', raised.cream)}>
      <Glyph name={name} small className="size-5" />
    </button>
  </div>
);

const StatusBar = () => (
  <div className="flex h-[35px] shrink-0 border-y-2 border-black bg-[#ffffcc]">
    <BarButton name="diagonal" />
    <BarButton name="angle" />
    <BarButton name="window" on />
    <label htmlFor="xy" className={clsx('w-[46px] self-center pl-[2px] whitespace-pre', monoSmall)}>X Y :</label>
    <div className="flex w-[174px] items-start border-x-2 border-black p-[1px]">
      <div className={clsx('flex h-[28px] w-full border-2 pl-1', sunken.cream)}>
        <span className="mt-[1px] h-4 w-0 border-l border-dotted border-black" />
        <input id="xy" className={clsx(mono, 'h-5 w-full min-w-0 bg-transparent outline-none')} />
      </div>
    </div>
    <BarButton name="alert" on />
    <div className={clsx('flex flex-1 items-center pb-[2px] pl-[3px] whitespace-pre', monoSmall)}>{'<M1> - Select first rectangle corner'}</div>
    <div className="flex w-[73px] overflow-hidden border-l-2 border-black bg-[#53cdaf] py-[2px] pl-[6px]">
      <Choice label="Units" value="MM" tone="green" className="w-full border-r-0" />
    </div>
  </div>
);

export default function App() {
  return (
    <div className="relative h-screen overflow-hidden bg-[#00a2ed] text-black">
      <div className="ml-2 flex h-full flex-col">
        <div className="flex h-[23px] shrink-0 items-center bg-white pr-[7px] pb-2 pl-2 text-[#8f8f8f]">
          <AppIcon className="size-4" />
          <p className="flex-1 pl-[5px] font-['Open_Sans',sans-serif] text-[16px] leading-4">Graphic Editor 9.07b2 (00@HY-HYCAM-PC064 - Windows, pid:20112)</p>
          <WindowButtons />
        </div>
        <Header />
        <div className="flex min-h-0 flex-1 bg-black">
          <Sidebar />
          <Canvas />
          <RightBar />
        </div>
        <StatusBar />
        <div className="h-[31px] shrink-0 border-2 border-r-0 border-t-[#5b8a8a] border-l-[#5b8a8a] border-b-[#dffcfc] bg-[#b3ffff] p-[1px]">
          <div className="h-full border border-r-0 border-black">
            <div className="h-full border-4 border-r-0 border-t-[#cdfdfd] border-l-[#cdfdfd] border-b-[#6fa3a3]" />
          </div>
        </div>
        <div className="ml-[271px] h-2 shrink-0 border-b-2 border-[#101820] bg-[#a9b6c6]" />
      </div>
      <DrillToolManager />
    </div>
  );
}
